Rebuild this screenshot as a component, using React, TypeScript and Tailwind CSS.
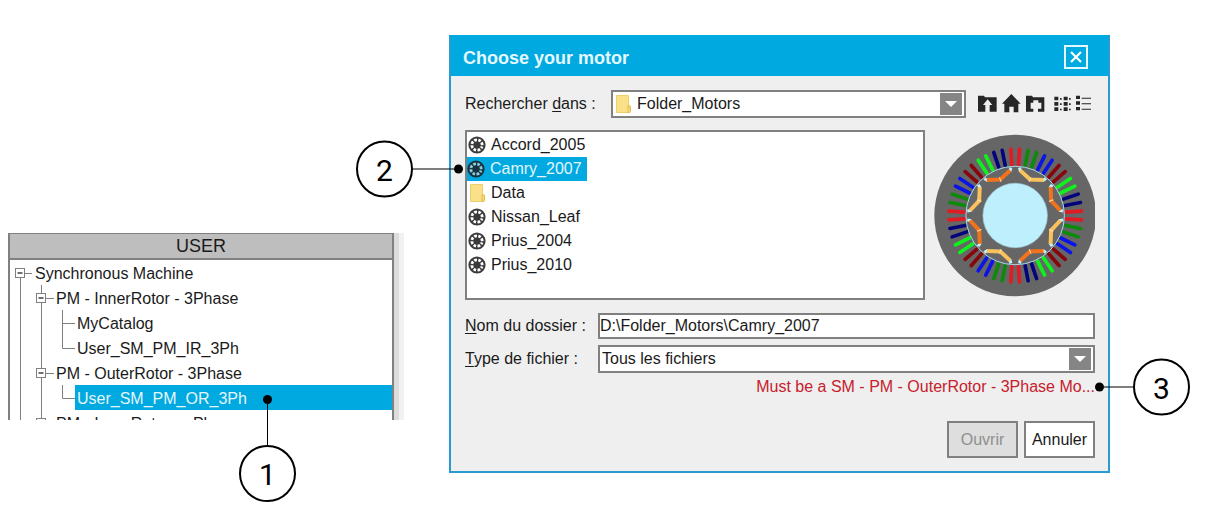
import { useState, type ReactNode } from "react";

type Guide = "line" | "root" | "box" | "tee" | "elbow";

const treeRows: { label: string; guides: Guide[]; selected?: boolean }[] = [
  { label: "Synchronous Machine", guides: ["root"] },
  { label: "PM - InnerRotor - 3Phase", guides: ["line", "box"] },
  { label: "MyCatalog", guides: ["line", "line", "tee"] },
  { label: "User_SM_PM_IR_3Ph", guides: ["line", "line", "elbow"] },
  { label: "PM - OuterRotor - 3Phase", guides: ["line", "box"] },
  { label: "User_SM_PM_OR_3Ph", guides: ["line", "line", "elbow"], selected: true },
  { label: "PM - InnerRotor - nPhase", guides: ["line", "box"] },
];

const entries: { name: string; kind: "motor" | "folder" }[] = [
  { name: "Accord_2005", kind: "motor" },
  { name: "Camry_2007", kind: "motor" },
  { name: "Data", kind: "folder" },
  { name: "Nissan_Leaf", kind: "motor" },
  { name: "Prius_2004", kind: "motor" },
  { name: "Prius_2010", kind: "motor" },
];

function TreeGuide({ kind }: { kind: Guide }) {
  const paths: Record<Guide, string> = {
    line: "M10.5 0V25",
    root: "M10.5 18V25M15 13.5H22",
    box: "M10.5 0V9M10.5 18V25M15 13.5H23",
    tee: "M10.5 0V25M10.5 13.5H23",
    elbow: "M10.5 0V13.5H23",
  };
  return (
    <svg width="21" height="25" className="shrink-0 overflow-visible" fill="none" stroke="#808080" aria-hidden="true">
      <path d={paths[kind]} />
      {(kind === "root" || kind === "box") && (
        <>
          <rect x="5.5" y="8.5" width="9" height="9" fill="#fff" />
          <path d="M7.5 13H12.5" stroke="#222" strokeWidth="1.3" />
        </>
      )}
    </svg>
  );
}

function FolderIcon() {
  return (
    <svg width="17" height="20" viewBox="0 0 17 20" aria-hidden="true">
      <path d="M1.5 1.5h12v17h-12z" fill="#fbe08a" stroke="#efcf6c" />
      <path d="M13 11.5h1q1.5 0 1.5 1.5v4.5q0 1-1 1H13z" fill="#f7d774" stroke="#e3bd52" />
    </svg>
  );
}

function MotorIcon({ active }: { active: boolean }) {
  return (
    <svg width="18" height="18" viewBox="0 0 18 18" aria-hidden="true">
      <circle cx="9" cy="9" r="8.6" fill={active ? "#17323e" : "#3a3a3a"} />
      <circle
        cx="9"
        cy="9"
        r="5.2"
        fill="none"
        stroke={active ? "#8ccbe2" : "#ffffff"}
        strokeWidth="2.8"
        strokeDasharray="2.7 1.384"
        strokeDashoffset="1.35"
        transform="rotate(22.5 9 9)"
      />
    </svg>
  );
}

function MotorPicture() {
  const slotColors = ["#e01b24", "#0b8a0b", "#0a14e6", "#86060e", "#10f01c", "#04047a"];
  const slots = Array.from({ length: 48 }, (_, i) => i);
  const poles = Array.from({ length: 8 }, (_, i) => i);
  return (
    <svg viewBox="-243 -245 482 490" className="h-[163px] w-[161px]" role="img" aria-label="Motor cross-section">
      <circle r="243" fill="#666666" />
      {slots.map((i) => (
        <path
          key={i}
          d="M0 -153V-200"
          transform={`rotate(${i * 7.5 - 3.75})`}
          stroke={slotColors[Math.floor(i / 2) % 6]}
          strokeWidth="11"
          strokeLinecap="round"
        />
      ))}
      <circle r="148" fill="#666666" stroke="#a9d8ea" strokeWidth="3" />
      {poles.map((i) => (
        <g key={i} transform={`rotate(${i * 45 + 22.5})`}>
          <path d="M-43 -138L-36 -128M43 -138L36 -128" stroke="#c4f1fb" strokeWidth="9" />
          <path d="M-38 -131L0 -117L38 -131" fill="none" stroke={i % 2 ? "#f2731c" : "#f9c25d"} strokeWidth="12" />
          <path d="M0 -124V-110" stroke="#fde3b4" strokeWidth="3" />
        </g>
      ))}
      <circle r="97" fill="#bdeffd" stroke="#9fc9d6" strokeWidth="2" />
    </svg>
  );
}

function DropArrow() {
  return (
    <span className="pointer-events-none absolute inset-y-[3px] right-[4px] flex w-[22px] items-center justify-center bg-[#858585]">
      <svg width="12" height="6" viewBox="0 0 12 6" aria-hidden="true">
        <path d="M0 0h12L6 6z" fill="#fff" />
      </svg>
    </span>
  );
}

function Bubble({ children }: { children: ReactNode }) {
  return (
    <span className="flex size-[57px] shrink-0 items-center justify-center rounded-full border-2 border-black bg-white pt-0.5 font-[Roboto,sans-serif] text-[30px] leading-none text-black">
      {children}
    </span>
  );
}

const Dot = () => <span className="size-[9px] shrink-0 rounded-full bg-black" />;

function ToolButton({ label, width, box, children }: { label: string; width: number; box: string; children: ReactNode }) {
  return (
    <button type="button" aria-label={label}>
      <svg width={width} height="20" viewBox={box} fill="#262626">
        {children}
      </svg>
    </button>
  );
}

function CatalogTree() {
  return (
    <section className="relative mt-[198px]">
      <div className="flex h-[187px] overflow-hidden">
        <div className="flex-1 border-x-2 border-[#808080] bg-white">
          <h2 className="border-t border-b-2 border-[#808080] bg-[#bebebe] text-center text-[18px] leading-6 text-[#1a1a1a]">
            USER
          </h2>
          <ul>
            {treeRows.map((row) => (
              <li key={row.label} className="flex h-[25px]">
                {row.guides.map((g, i) => (
                  <TreeGuide key={i} kind={g} />
                ))}
                <button
                  type="button"
                  className={
                    row.selected
                      ? "ml-0.5 flex-1 bg-[#00a9e0] pt-0.5 pl-0.5 text-left text-[#e4f6fc]"
                      : "ml-0.5 flex-1 pt-0.5 pl-0.5 text-left"
                  }
                >
                  {row.label}
                </button>
              </li>
            ))}
          </ul>
        </div>
        <div className="w-[10px] border-r-[5px] border-[#f1f1f1] bg-[#dcdcdc]" />
      </div>
      <div className="absolute top-[162px] left-[231px] flex flex-col items-center">
        <Dot />
        <span className="h-[41px] w-px bg-black" />
        <Bubble>1</Bubble>
      </div>
    </section>
  );
}

function MotorDialog() {
  const [picked, setPicked] = useState("Camry_2007");
  const [path, setPath] = useState("D:\\Folder_Motors\\Camry_2007");
  const fieldClass = "w-full appearance-none border-2 border-[#808080] bg-white outline-none";

  return (
    <section role="dialog" aria-labelledby="dialog-title" className="border-2 border-[#2a9bd0] border-t-[#00a9e0] bg-[#efefef]">
      <header className="flex h-[39px] items-center justify-between bg-[#00a9e0] pr-5 pl-3">
        <h1 id="dialog-title" className="pt-0.5 text-[18px] font-bold text-[#e4f8ff]">
          Choose your motor
        </h1>
        <button type="button" aria-label="Close" className="flex size-6 items-center justify-center border-2 border-[#e4f8ff]">
          <svg width="12" height="12" viewBox="0 0 12 12" stroke="#fff" strokeWidth="2.2">
            <path d="M1 1L11 11M11 1L1 11" />
          </svg>
        </button>
      </header>

      <div className="pt-3.5 pr-[13px] pb-[13px] pl-3.5">
        <div className="flex items-center">
          <label htmlFor="look-in" className="w-[146px]">
            Rechercher <u className="underline-offset-2">d</u>ans :
          </label>
          <div className="relative flex-1">
            <select id="look-in" className={`${fieldClass} block h-7 pl-6`}>
              <option>Folder_Motors</option>
            </select>
            <span className="pointer-events-none absolute inset-y-1 left-1">
              <FolderIcon />
            </span>
            <DropArrow />
          </div>
          <div className="ml-3 flex w-[117px] items-center gap-1">
            <ToolButton label="Parent folder" width={20} box="24 26 60 60">
              <path d="M24 31H42L45 36H80V79H59V59H67L53 42L39 59H46V79H24Z" />
            </ToolButton>
            <ToolButton label="Home" width={20} box="96 26 60 60">
              <path d="M124 26L152 55H145V81H131V64H118V81H103V55H96Z" />
            </ToolButton>
            <ToolButton label="New folder" width={20} box="168 26 60 60">
              <path d="M168 31H186L189 36H223V79H204V70H214V52H205V45H190V52H182V70H190V79H168Z" />
            </ToolButton>
            <span className="ml-1 flex gap-1">
              <ToolButton label="Icon view" width={18} box="252 26 54 60">
                <path d="M253 34h12v11h-12zM253 50h12v11h-12zM253 66h12v11h-12zM281 34h12v11h-12zM281 50h12v11h-12zM281 66h12v11h-12zM270 38h5v5h-5zM270 54h5v5h-5zM270 70h5v5h-5zM297 38h5v5h-5zM297 54h5v5h-5zM297 70h5v5h-5z" />
              </ToolButton>
              <ToolButton label="List view" width={16} box="318 26 48 60">
                <path d="M318 31h12v10h-12zM318 48h12v10h-12zM318 65h12v10h-12zM335 37h28v3h-28zM335 54h28v3h-28zM335 70h28v3h-28z" />
              </ToolButton>
            </span>
          </div>
        </div>

        <div className="mt-3 flex items-center gap-[9px]">
          <ul className="h-[170px] flex-1 border-2 border-[#808080] bg-white pt-px">
            {entries.map(({ name, kind }) => {
              const active = name === picked;
              return (
                <li key={name} className="flex h-6">
                  <span className="relative flex">
                    <button
                      type="button"
                      onClick={() => setPicked(name)}
                      className={
                        active
                          ? "flex items-center gap-[5px] bg-[#00a9e0] pr-[5px] text-[#e4f6fc]"
                          : "flex items-center gap-[5px] pl-px"
                      }
                    >
                      <span className="flex w-[18px] justify-center">
                        {kind === "motor" ? <MotorIcon active={active} /> : <FolderIcon />}
                      </span>
                      {name}
                    </button>
                    {name === "Camry_2007" && (
                      <span className="absolute top-1/2 right-full mr-1 flex -translate-y-1/2 items-center">
                        <Bubble>2</Bubble>
                        <span className="h-px w-[41px] bg-black" />
                        <Dot />
                      </span>
                    )}
                  </span>
                </li>
              );
            })}
          </ul>
          <MotorPicture />
        </div>

        <div className="mt-[13px] flex items-center">
          <label htmlFor="folder-name" className="w-[133px]">
            <u className="underline-offset-2">N</u>om du dossier :
          </label>
          <div className="flex-1">
            <input
              id="folder-name"
              value={path}
              onChange={(e) => setPath(e.target.value)}
              className={`${fieldClass} block h-[26px]`}
            />
          </div>
        </div>
        <div className="mt-1.5 flex items-center">
          <label htmlFor="file-type" className="w-[133px]">
            <u className="underline-offset-2">T</u>ype de fichier :
          </label>
          <div className="relative flex-1">
            <select id="file-type" className={`${fieldClass} block h-7 pl-0.5`}>
              <option>Tous les fichiers</option>
            </select>
            <DropArrow />
          </div>
        </div>

        <div className="relative mt-0.5 text-right text-[#c8202c]">
          <p role="alert">Must be a SM - PM - OuterRotor - 3Phase Mo...</p>
          <span className="absolute top-1/2 left-full flex -translate-y-1/2 items-center">
            <Dot />
            <span className="h-px w-[29px] bg-black" />
            <Bubble>3</Bubble>
          </span>
        </div>

        <div className="mt-[22px] flex justify-end gap-1.5">
          <button type="button" disabled className="h-[37px] w-[71px] border-2 border-[#808080] bg-[#dedede] text-[#8f8f8f]">
            Ouvrir
          </button>
          <button type="button" className="h-[37px] w-[71px] border-2 border-[#808080] bg-white">
            Annuler
          </button>
        </div>
      </div>
    </section>
  );
}

export default function App() {
  return (
    <main className="grid min-h-screen grid-cols-[396fr_661fr] items-start gap-[45px] bg-white pt-[35px] pr-[99px] pl-2 font-['Liberation_Sans',Arial,sans-serif] text-base leading-6 text-[#1a1a1a]">
      <CatalogTree />
      <MotorDialog />
    </main>
  );
}
